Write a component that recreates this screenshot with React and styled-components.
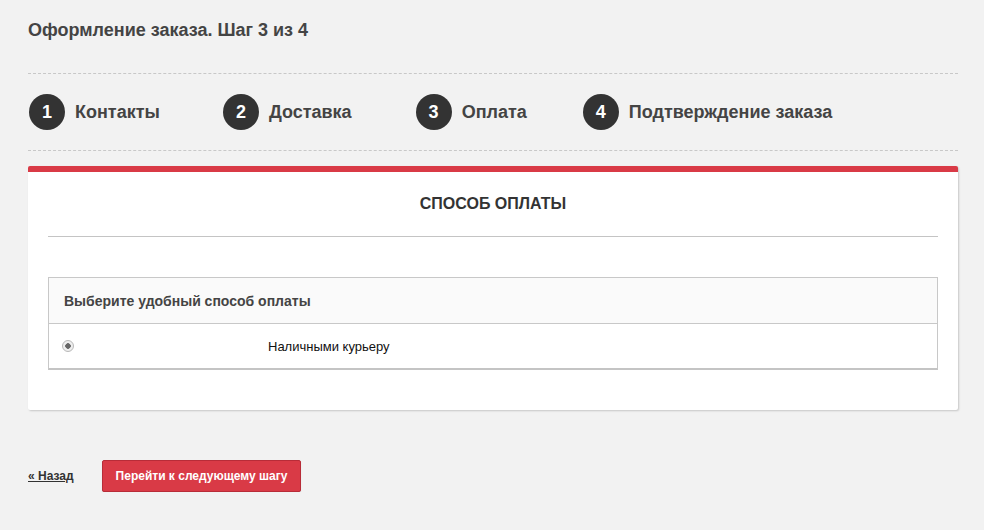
import React from 'react'
import styled, { createGlobalStyle } from 'styled-components'

const GlobalStyle = createGlobalStyle`
    html, body {
        margin: 0;
        padding: 0;
        background: #f2f2f2;
        font-family: "Liberation Sans", Arial, sans-serif;
    }
`

const Page = styled.div`
    width: 930px;
    padding: 19px 26px 0 28px;
`

const Title = styled.h1`
    margin: 0;
    font-size: 18px;
    font-weight: 700;
    color: #444;
    line-height: 22px;
`

const Steps = styled.div`
    margin-top: 32px;
    display: flex;
    align-items: center;
    height: 76px;
    border-top: 1px dashed #c8c8c8;
    border-bottom: 1px dashed #c8c8c8;
`

const Step = styled.div`
    display: flex;
    align-items: center;
    gap: 10px;
    margin-right: ${(p) => p.$gap}px;
    margin-left: 1px;
`

const StepNum = styled.span`
    width: 36px;
    height: 36px;
    border-radius: 50%;
    background: #333;
    color: #fff;
    font-size: 18px;
    font-weight: 700;
    display: flex;
    align-items: center;
    justify-content: center;
`

const StepName = styled.span`
    font-size: 18px;
    font-weight: 700;
    color: #444;
`

const Card = styled.div`
    margin-top: 15px;
    background: #fff;
    border-top: 6px solid #d93a46;
    border-radius: 2px;
    box-shadow: 1px 1px 2px rgba(0, 0, 0, 0.18);
    padding: 0 20px 40px;
`

const CardTitle = styled.div`
    text-align: center;
    font-size: 16px;
    font-weight: 700;
    color: #333;
    padding: 23px 0 24px;
    line-height: 17px;
    border-bottom: 1px solid #c4c4c4;
`

const Methods = styled.div`
    margin-top: 40px;
    border: 1px solid #c8c8c8;
    border-bottom: 2px solid #c4c4c4;
`

const MethodsHead = styled.div`
    background: #fafafa;
    height: 45px;
    display: flex;
    align-items: center;
    padding-left: 15px;
    font-size: 14px;
    font-weight: 700;
    color: #444;
    border-bottom: 1px solid #c8c8c8;
`

const MethodRow = styled.label`
    height: 44px;
    display: flex;
    align-items: center;
    padding-left: 13px;
`

const Radio = styled.span`
    width: 12px;
    height: 12px;
    box-sizing: border-box;
    border-radius: 50%;
    border: 1px solid #b8b8b8;
    background: radial-gradient(circle, #666 0 2.5px, #eee 3px);
    flex: none;
`

const MethodName = styled.span`
    margin-left: 194px;
    font-size: 13px;
    color: #111;
    font-weight: 500;
`

const Footer = styled.div`
    margin-top: 50px;
    display: flex;
    align-items: center;
    gap: 28px;
`

const BackLink = styled.a`
    font-size: 12px;
    font-weight: 700;
    color: #333;
    text-decoration: underline;
`

const NextButton = styled.button`
    height: 32px;
    padding: 0 13px;
    background: #d93a46;
    border: 1px solid #b82c38;
    border-radius: 2px;
    color: #fff;
    font-family: "Liberation Sans", Arial, sans-serif;
    font-size: 12px;
    font-weight: 700;
    box-shadow: 0 1px 1px rgba(0, 0, 0, 0.15);
`

const steps = [
    { n: 1, name: 'Контакты', gap: 62 },
    { n: 2, name: 'Доставка', gap: 63 },
    { n: 3, name: 'Оплата', gap: 55 },
    { n: 4, name: 'Подтверждение заказа', gap: 0 },
]

export default function App() {
    return (
        <Page>
            <GlobalStyle />
            <Title>Оформление заказа. Шаг 3 из 4</Title>
            <Steps>
                {steps.map((s) => (
                    <Step key={s.n} $gap={s.gap}>
                        <StepNum>{s.n}</StepNum>
                        <StepName>{s.name}</StepName>
                    </Step>
                ))}
            </Steps>
            <Card>
                <CardTitle>СПОСОБ ОПЛАТЫ</CardTitle>
                <Methods>
                    <MethodsHead>Выберите удобный способ оплаты</MethodsHead>
                    <MethodRow>
                        <Radio />
                        <MethodName>Наличными курьеру</MethodName>
                    </MethodRow>
                </Methods>
            </Card>
            <Footer>
                <BackLink href="#">« Назад</BackLink>
                <NextButton>Перейти к следующему шагу</NextButton>
            </Footer>
        </Page>
    )
}
